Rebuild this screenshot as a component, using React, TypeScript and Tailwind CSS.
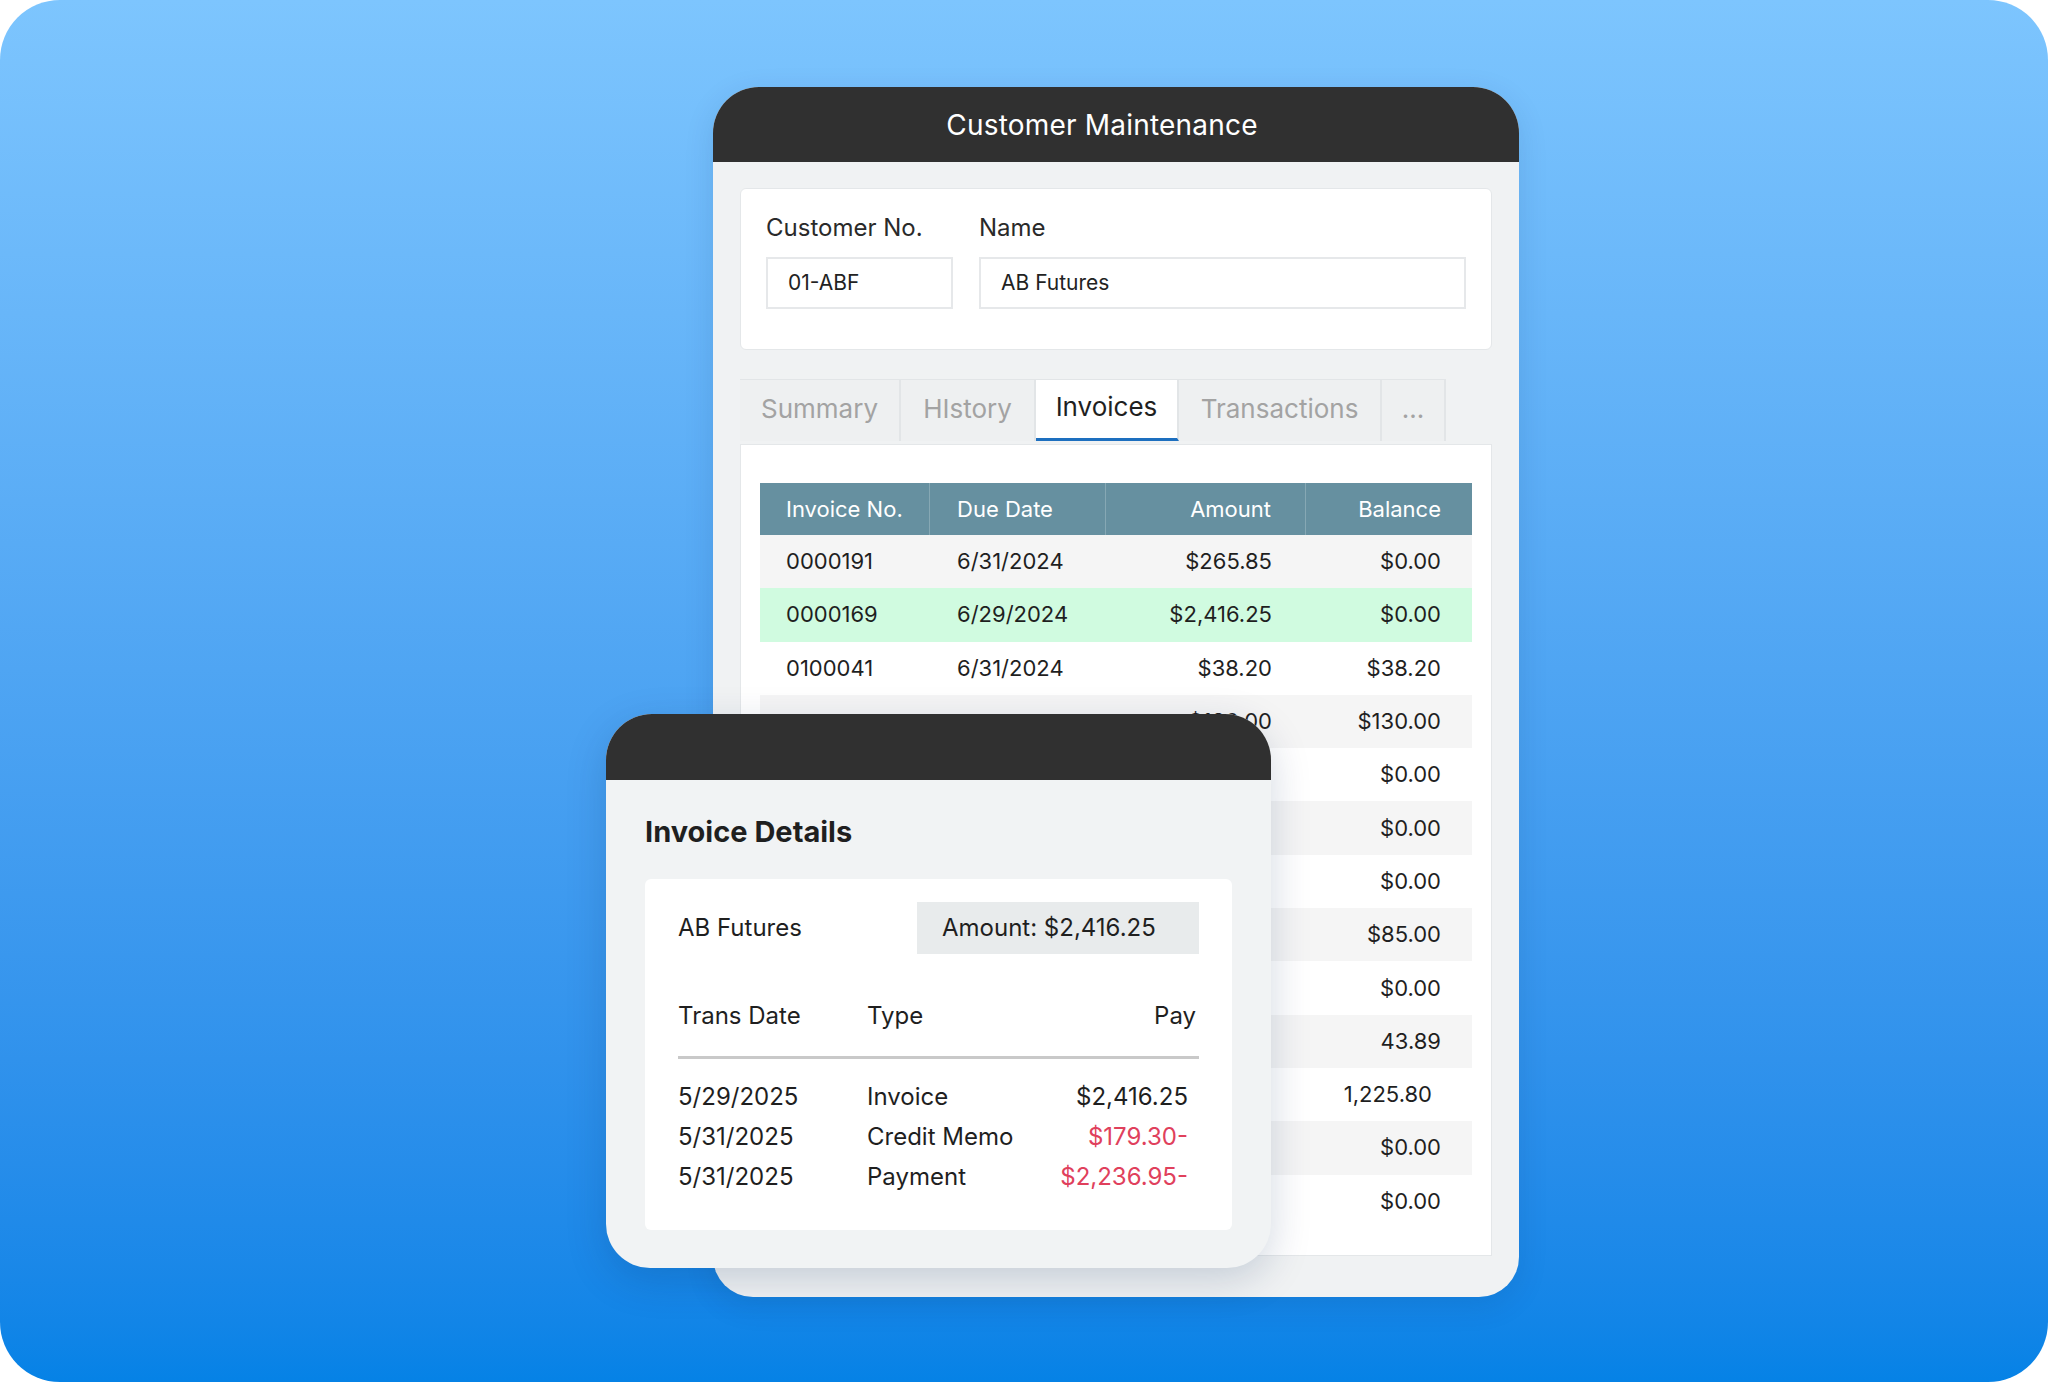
import React from "react";

// rows hidden behind the details card keep only what still shows
const rows = [
  { no: "0000191", date: "6/31/2024", amount: "$265.85", balance: "$0.00" },
  { no: "0000169", date: "6/29/2024", amount: "$2,416.25", balance: "$0.00", selected: true },
  { no: "0100041", date: "6/31/2024", amount: "$38.20", balance: "$38.20" },
  { no: "", date: "", amount: "$130.00", balance: "$130.00" },
  { no: "", date: "", amount: "", balance: "$0.00" },
  { no: "", date: "", amount: "", balance: "$0.00" },
  { no: "", date: "", amount: "", balance: "$0.00" },
  { no: "", date: "", amount: "", balance: "$85.00" },
  { no: "", date: "", amount: "", balance: "$0.00" },
  { no: "", date: "", amount: "", balance: "43.89" },
  { no: "", date: "", amount: "", balance: "1,225.80", pad: "pr-[40px]" },
  { no: "", date: "", amount: "", balance: "$0.00" },
  { no: "", date: "", amount: "", balance: "$0.00" },
];

const tabs = [
  { label: "Summary", w: "w-[161px]" },
  { label: "HIstory", w: "w-[135px]" },
  { label: "Invoices", w: "w-[143px]", active: true },
  { label: "Transactions", w: "w-[203px]" },
  { label: "...", w: "w-[64px]" },
];

const trans = [
  { date: "5/29/2025", type: "Invoice", pay: "$2,416.25" },
  { date: "5/31/2025", type: "Credit Memo", pay: "$179.30-", neg: true },
  { date: "5/31/2025", type: "Payment", pay: "$2,236.95-", neg: true },
];

function InvoiceDetails() {
  return (
    <div className="absolute left-[606px] top-[714px] w-[665px] h-[554px] rounded-t-[46px] rounded-b-[44px] bg-[#f1f3f4] shadow-[0_12px_40px_rgba(0,40,90,0.18)] overflow-hidden flex flex-col">
      <div className="h-[66px] bg-[#303030] shrink-0" />
      <div className="flex-1 px-[39px] pt-[34px] pb-[38px] flex flex-col">
        <h2 className="text-[29px] font-bold text-[#1f1f1f] leading-[36px]">Invoice Details</h2>
        <div className="mt-[29px] flex-1 bg-white rounded-[6px] px-[33px] pt-[23px]">
          <div className="flex items-center justify-between">
            <span className="text-[24px] text-[#1f1f1f]">AB Futures</span>
            <div className="w-[282px] h-[52px] bg-[#e8ebec] flex items-center pl-[25px] text-[24px] text-[#1f1f1f]">
              Amount: $2,416.25
            </div>
          </div>
          <div className="mt-[44px] flex items-center text-[24px] text-[#1f1f1f] pb-[22px] border-b-[3px] border-[#c9c9c9]">
            <span className="w-[189px]">Trans Date</span>
            <span className="flex-1">Type</span>
            <span className="pr-[3px]">Pay</span>
          </div>
          <div className="pt-[18px] flex flex-col">
            {trans.map((t) => (
              <div key={t.pay} className="flex items-center h-[40px] text-[24px] text-[#1f1f1f]">
                <span className="w-[189px]">{t.date}</span>
                <span className="flex-1">{t.type}</span>
                <span className={`pr-[11px] ${t.neg ? "text-[#e0405c]" : ""}`}>{t.pay}</span>
              </div>
            ))}
          </div>
        </div>
      </div>
    </div>
  );
}

export default function App() {
  return (
    <div className="w-[2048px] h-[1382px] bg-white" style={{ fontFamily: "Inter, 'Noto Sans', sans-serif" }}>
      <div className="relative w-full h-full rounded-[60px] bg-gradient-to-b from-[#7dc5fe] to-[#0582e6] pl-[713px] pt-[87px] overflow-hidden">
        <div className="w-[806px] h-[1210px] rounded-t-[46px] rounded-b-[40px] bg-[#f0f2f3] shadow-[0_8px_30px_rgba(0,40,90,0.12)] overflow-hidden flex flex-col">
          <div className="h-[75px] bg-[#303030] flex items-center justify-center pr-[28px] shrink-0">
            <span className="text-white text-[28px] tracking-[0.2px]">Customer Maintenance</span>
          </div>
          <div className="px-[27px] pt-[26px] pb-[41px] flex flex-col flex-1">
            <div className="h-[162px] bg-white rounded-[6px] border border-[#e4e7e9] px-[25px] pt-[13px] flex gap-[26px]">
              <div className="flex flex-col">
                <label className="text-[24px] text-[#2a2a2a] leading-[52px]">Customer No.</label>
                <div className="mt-[3px] w-[187px] h-[52px] border-2 border-[#e6e8ea] flex items-center px-[20px] text-[21px] text-[#222]">
                  01-ABF
                </div>
              </div>
              <div className="flex flex-col">
                <label className="text-[24px] text-[#2a2a2a] leading-[52px]">Name</label>
                <div className="mt-[3px] w-[487px] h-[52px] border-2 border-[#e6e8ea] flex items-center px-[20px] text-[21px] text-[#222]">
                  AB Futures
                </div>
              </div>
            </div>

            <div className="mt-[29px] flex h-[62px]">
              {tabs.map((t) => (
                <div
                  key={t.label}
                  className={`${t.w} flex items-center justify-center pb-[5px] text-[26px] border-r-2 border-t border-[#e2e5e7] ${
                    t.active
                      ? "bg-white text-[#1f1f1f] border-b-[3px] border-b-[#1d6fbf]"
                      : "bg-[#eef0f1] text-[#a3a3a3]"
                  }`}
                >
                  {t.label}
                </div>
              ))}
            </div>

            <div className="mt-[3px] flex-1 bg-white border border-[#e4e7e9] px-[19px] pt-[38px]">
              <div className="flex h-[52px] bg-[#6690a0] text-white text-[22px]">
                <div className="w-[170px] flex items-center pl-[26px] border-r border-[#86a8b4]">Invoice No.</div>
                <div className="w-[176px] flex items-center pl-[27px] border-r border-[#86a8b4]">Due Date</div>
                <div className="w-[200px] flex items-center justify-end pr-[34px] border-r border-[#86a8b4]">Amount</div>
                <div className="flex-1 flex items-center justify-end pr-[31px]">Balance</div>
              </div>
              {rows.map((r, i) => (
                <div
                  key={i}
                  className={`flex h-[53.3px] text-[22px] text-[#1f1f1f] ${
                    r.selected ? "bg-[#d0fbe0]" : i === 0 || i % 2 === 1 ? "bg-[#f5f5f5]" : "bg-white"
                  }`}
                >
                  <div className="w-[170px] flex items-center pl-[26px]">{r.no}</div>
                  <div className="w-[176px] flex items-center pl-[27px]">{r.date}</div>
                  <div className="w-[200px] flex items-center justify-end pr-[34px]">{r.amount}</div>
                  <div className={`flex-1 flex items-center justify-end ${r.pad ?? "pr-[31px]"}`}>{r.balance}</div>
                </div>
              ))}
            </div>
          </div>
        </div>
        <InvoiceDetails />
      </div>
    </div>
  );
}
